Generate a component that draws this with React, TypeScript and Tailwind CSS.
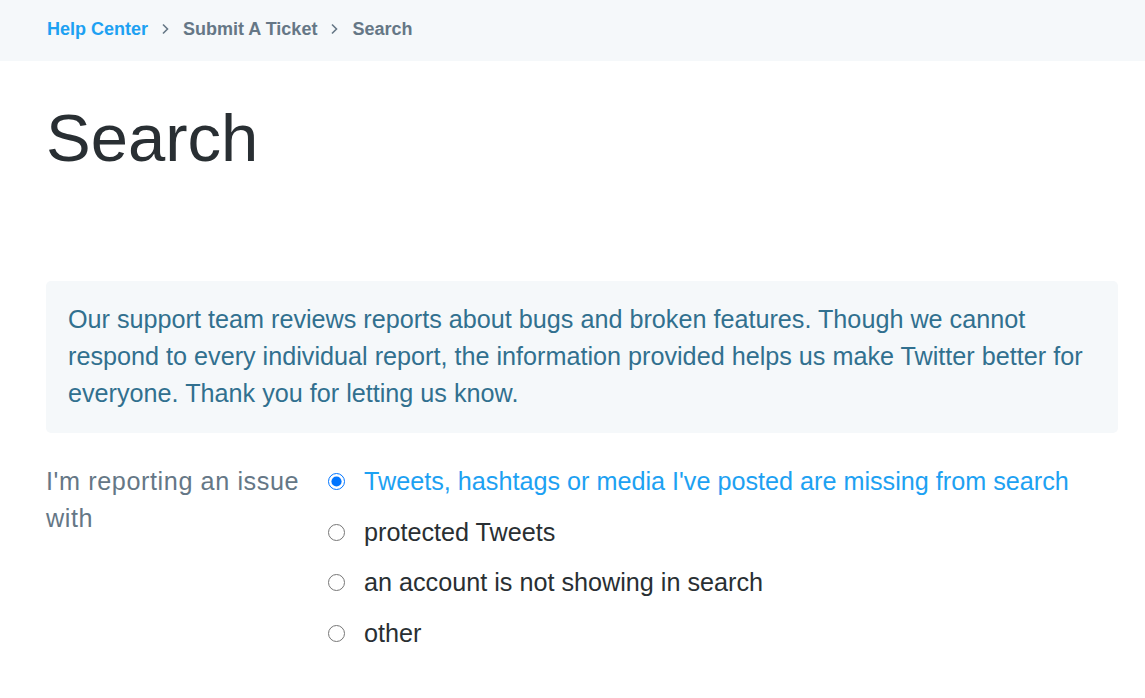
import React, { useState } from "react";

const options = [
  "Tweets, hashtags or media I've posted are missing from search",
  "protected Tweets",
  "an account is not showing in search",
  "other",
];

function Chevron() {
  return (
    <svg width="9" height="12" viewBox="0 0 9 12" className="mx-[13px] text-[#657786]">
      <path d="M2 1.5 6.5 6 2 10.5" fill="none" stroke="currentColor" strokeWidth="1.6" />
    </svg>
  );
}

export default function App() {
  const [picked, setPicked] = useState(0);
  return (
    <div className="min-h-[698px] bg-white font-['Liberation_Sans',Arial,sans-serif]">
      <nav className="flex h-[61px] items-center bg-[#f5f8fa] px-[47px] pb-[3px] text-[18px] font-bold">
        <a className="text-[#1da1f2]">Help Center</a>
        <Chevron />
        <a className="text-[#657786]">Submit A Ticket</a>
        <Chevron />
        <span className="text-[#657786]">Search</span>
      </nav>

      <main className="px-[46px]">
        <h1 className="pt-[37px] text-[67px] leading-[80px] font-normal text-[#292f33]">Search</h1>

        <div className="mt-[103px] mr-[-19px] rounded-[5px] bg-[#f5f8fa] px-[22px] pt-[20px] pb-[21px] text-[25.2px] leading-[37px] text-[#31708f]">
          Our support team reviews reports about bugs and broken features. Though we cannot respond
          to every individual report, the information provided helps us make Twitter better for
          everyone. Thank you for letting us know.
        </div>

        <div className="mt-[30px] flex text-[25.2px] leading-[37px]">
          <div className="w-[282px] shrink-0 pr-[14px] tracking-[0.6px] text-[#657786]">
            I'm reporting an issue with
          </div>
          <div className="flex flex-col gap-[13.5px]">
            {options.map((label, i) => (
              <label key={label} className="flex cursor-pointer items-center">
                <input
                  type="radio"
                  name="issue"
                  checked={picked === i}
                  onChange={() => setPicked(i)}
                  className="m-0 h-[17px] w-[17px]"
                />
                <span className={"ml-[19px] " + (picked === i ? "text-[#1da1f2]" : "text-[#292f33]")}>
                  {label}
                </span>
              </label>
            ))}
          </div>
        </div>
      </main>
    </div>
  );
}
